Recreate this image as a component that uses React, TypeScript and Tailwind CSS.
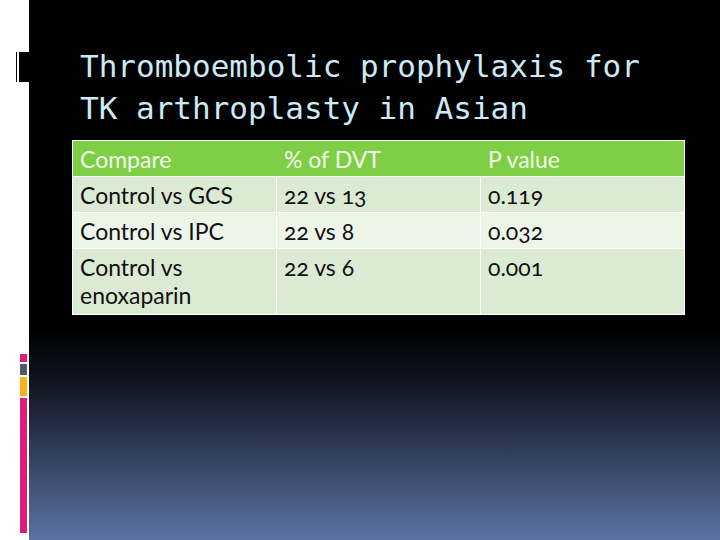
const rows = [
  { compare: ['Control vs GCS'], dvt: '22 vs 13', p: '0.119', bg: 'bg-[#dbead3]', h: 'h-[35px]' },
  { compare: ['Control vs IPC'], dvt: '22 vs 8', p: '0.032', bg: 'bg-[#edf5e9]', h: 'h-[35px]' },
  { compare: ['Control vs', 'enoxaparin'], dvt: '22 vs 6', p: '0.001', bg: 'bg-[#dbead3]', h: 'h-[65px]' },
];

function SideStrip() {
  return (
    <div className="w-[29px] h-full bg-white flex flex-col items-end shrink-0">
      {/* top marker */}
      <div className="mt-[52px] w-[13px] h-[30px] flex">
        <div className="w-px bg-black" />
        <div className="w-[2px] bg-white" />
        <div className="flex-1 bg-black" />
      </div>

      {/* bottom colour bars */}
      <div className="mt-[272px] mr-[2px] w-[7px] flex flex-col gap-[2px]">
        <div className="h-[8px] bg-[#dc1d7c]" />
        <div className="h-[11px] bg-[#4f5b6b]" />
        <div className="h-[19px] bg-[#f6b51c]" />
        <div className="h-[135px] bg-[#dc1d7c]" />
      </div>
    </div>
  );
}

export default function App() {
  return (
    <div className="w-[720px] h-[540px] flex overflow-hidden">
      <SideStrip />

      <div className="flex-1 h-full bg-[linear-gradient(to_bottom,#000_61%,#101520_71%,#5b73a3_100%)]">
        {/* title (third line sits under the table) */}
        <div
          className="h-[140px] pt-[45px] pl-[51px] text-[31px] leading-[42px] text-[#cde9f6] whitespace-nowrap"
          style={{ fontFamily: '"DejaVu Sans Mono", monospace' }}
        >
          <div>Thromboembolic prophylaxis for</div>
          <div>TK arthroplasty in Asian</div>
          <div className="pt-[7px]">studies</div>
        </div>

        {/* table */}
        <div
          className="relative z-10 ml-[43px] w-[613px] border border-white bg-white flex flex-col gap-px text-[23px] leading-[28px]"
          style={{ fontFamily: 'Lato, "Open Sans", sans-serif' }}
        >
          <div className="h-[35px] bg-[#7fcf46] text-[#f3fbea] grid grid-cols-[203px_203px_1fr] gap-px">
            <div className="px-[7px] pt-[4px]">Compare</div>
            <div className="px-[7px] pt-[4px]">% of DVT</div>
            <div className="px-[7px] pt-[4px]">P value</div>
          </div>
          {rows.map((r) => (
            <div key={r.p} className={`${r.h} grid grid-cols-[203px_203px_1fr] gap-px text-[#111] oldstyle-nums`}>
              <div className={`${r.bg} px-[7px] pt-[4px]`}>
                {r.compare.map((c) => (
                  <div key={c}>{c}</div>
                ))}
              </div>
              <div className={`${r.bg} px-[7px] pt-[4px]`}>{r.dvt}</div>
              <div className={`${r.bg} px-[7px] pt-[4px]`}>{r.p}</div>
            </div>
          ))}
        </div>
      </div>
    </div>
  );
}
